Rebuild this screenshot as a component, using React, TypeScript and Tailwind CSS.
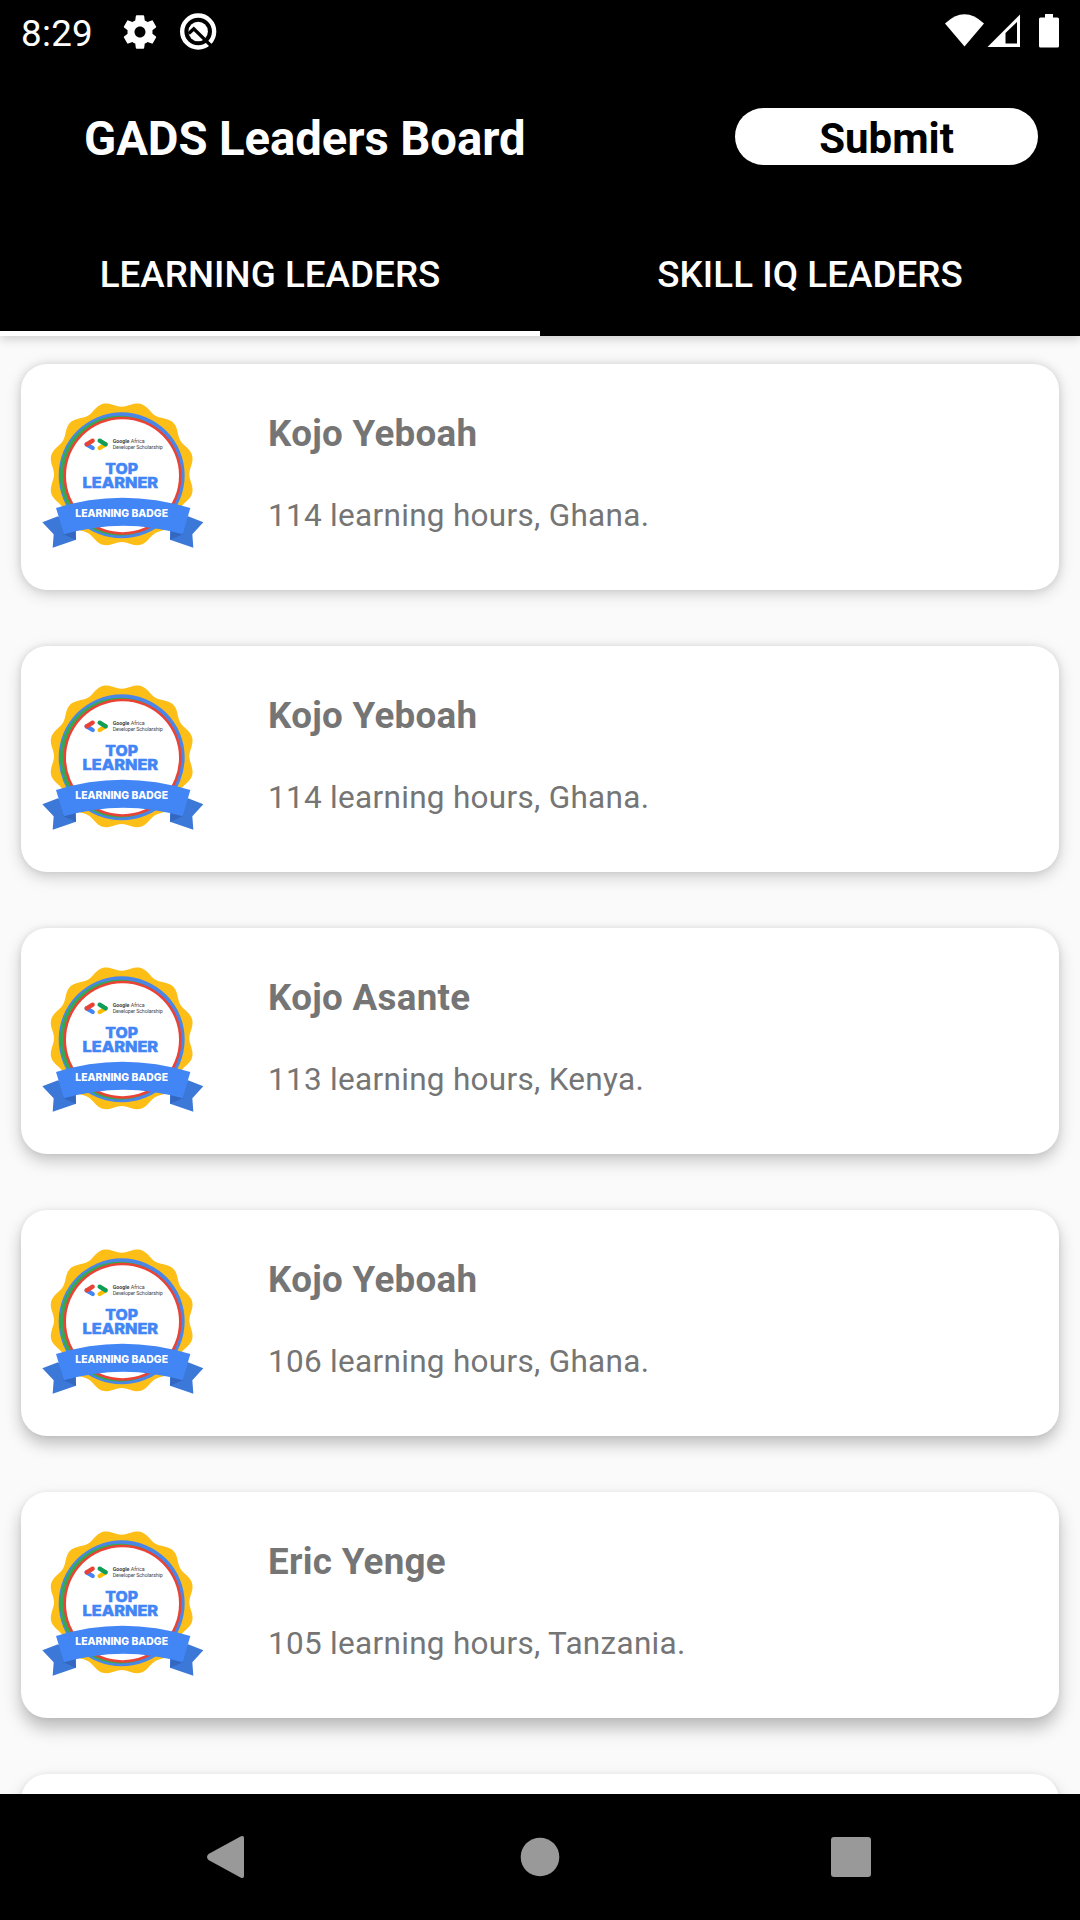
const leaders = [
  { name: 'Kojo Yeboah', detail: '114 learning hours, Ghana.', shadow: 'shadow-[0_4px_16px_rgba(0,0,0,0.16),0_0_8px_rgba(0,0,0,0.10)]' },
  { name: 'Kojo Yeboah', detail: '114 learning hours, Ghana.', shadow: 'shadow-[0_5px_16px_rgba(0,0,0,0.18),0_0_7px_rgba(0,0,0,0.09)]' },
  { name: 'Kojo Asante', detail: '113 learning hours, Kenya.', shadow: 'shadow-[0_7px_16px_rgba(0,0,0,0.21),0_0_6px_rgba(0,0,0,0.08)]' },
  { name: 'Kojo Yeboah', detail: '106 learning hours, Ghana.', shadow: 'shadow-[0_8px_16px_rgba(0,0,0,0.24),0_0_5px_rgba(0,0,0,0.07)]' },
  { name: 'Eric Yenge', detail: '105 learning hours, Tanzania.', shadow: 'shadow-[0_10px_17px_rgba(0,0,0,0.26),0_0_5px_rgba(0,0,0,0.06)]' },
  { name: '', detail: '', shadow: 'shadow-[0_10px_17px_rgba(0,0,0,0.26),0_0_5px_rgba(0,0,0,0.06)]' },
];

// Twelve-lobed outline of the yellow seal.
const seal =
  'M' +
  Array.from({ length: 180 }, (_, i) => {
    const a = (i / 180) * Math.PI * 2;
    const r = 211 - 8 * Math.cos(12 * a);
    return `${(275 + r * Math.sin(a)).toFixed(1)} ${(253 - r * Math.cos(a)).toFixed(1)}`;
  }).join('L') +
  'Z';

function Badge() {
  return (
    <svg viewBox="0 0 570 510" className="h-[170px] w-[190px] shrink-0">
      <path d={seal} fill="#fdbf17" />
      <circle cx="275" cy="256" r="189" fill="#4a86e8" />
      <circle cx="270" cy="257" r="180" fill="#34a853" />
      <circle cx="277.500" cy="257" r="177" fill="#ea4335" />
      <circle cx="277.500" cy="257" r="169.500" fill="#fff" />
      <g fill="none" strokeWidth="13" strokeLinecap="round">
        <path d="M170 163L188 174" stroke="#4285f4" />
        <path d="M170 163L188 152" stroke="#ea4335" />
        <path d="M227 163L209 174" stroke="#fbbc04" />
        <path d="M209 152L227 163" stroke="#109d58" />
      </g>
      <g fontFamily="Roboto, sans-serif" fontSize="16" fill="#444">
        <text x="248" y="158" textLength="96"><tspan fontWeight="700">Google</tspan> Africa</text>
        <text x="248" y="177" textLength="150">Developer Scholarship</text>
      </g>
      <g fontFamily="Inter, sans-serif" fontWeight="800" textAnchor="middle" fill="#4285f4" stroke="#4285f4" strokeWidth="1.500" fontSize="44">
        <text x="275" y="252" textLength="98" lengthAdjust="spacingAndGlyphs">TOP</text>
        <text x="271" y="295" textLength="227" lengthAdjust="spacingAndGlyphs">LEARNER</text>
      </g>
      <path d="M37 397L84 379L138 420V449L68 473L71 433Z" fill="#3c78d8" />
      <path d="M520 397L474 379L420 420V449L490 473L487 433Z" fill="#3c78d8" />
      <path d="M97 431L134 422L138 449Z" fill="#3367c0" />
      <path d="M462 431L424 422L420 449Z" fill="#3367c0" />
      <path d="M78 354Q275 292 481 354L458 433Q280 381 102 433Z" fill="#4285f4" />
      <text x="275" y="381" textLength="278" lengthAdjust="spacingAndGlyphs" textAnchor="middle" fill="#fff" fontFamily="Inter, sans-serif" fontWeight="800" fontSize="32">LEARNING BADGE</text>
    </svg>
  );
}

function StatusBar() {
  return (
    <div className="flex h-[64px] items-start justify-between">
      <div className="flex items-start">
        <span className="ml-[21px] mt-[12px] w-[100px] text-[36.750px] leading-[43px] tracking-[0.3px]">8:29</span>
        <svg viewBox="0 0 24 24" className="-ml-[1px] mt-[12px] size-[40px]" fill="#fff">
          <path d="M19.43 12.98c.04-.32.07-.64.07-.98s-.03-.66-.07-.98l2.11-1.65c.19-.15.24-.42.12-.64l-2-3.46c-.12-.22-.39-.3-.61-.22l-2.49 1c-.52-.4-1.080-.73-1.690-.98l-.38-2.650C14.460 2.180 14.250 2 14 2h-4c-.25 0-.46.18-.49.42l-.38 2.650c-.61.25-1.170.59-1.690.98l-2.490-1c-.23-.09-.49 0-.61.22l-2 3.460c-.13.22-.07.49.12.64l2.110 1.650c-.04.32-.07.65-.07.98s.03.66.07.98l-2.110 1.650c-.19.15-.24.42-.12.64l2 3.460c.12.22.39.3.61.22l2.490-1c.52.4 1.080.73 1.690.98l.38 2.650c.03.24.24.42.49.42h4c.25 0 .46-.18.49-.42l.38-2.650c.61-.25 1.170-.59 1.690-.98l2.490 1c.23.09.49 0 .61-.22l2-3.460c.12-.22.07-.49-.12-.64zM12 15.300c-1.820 0-3.300-1.480-3.300-3.300s1.480-3.300 3.300-3.300 3.300 1.480 3.300 3.300-1.480 3.300-3.300 3.300z" />
        </svg>
        <svg viewBox="540 39 110 110" className="ml-[20px] mt-[13px] size-[37px]">
          <circle cx="594" cy="94" r="47.500" fill="none" stroke="#fff" strokeWidth="13" />
          <circle cx="594" cy="94" r="29" fill="#fff" />
          <path d="M566 100L581 86L632 136" fill="none" stroke="#000" strokeWidth="10" />
        </svg>
      </div>
      <svg viewBox="900 0 180 70" className="h-[70px] w-[180px]" fill="#fff">
        <path d="M945 23.500Q964.500 5 984 23.500L964.500 46.500Z" />
        <path fillRule="evenodd" d="M987.500 47L1020 14.500V47ZM1005.500 33V43.500H1017V22Z" />
        <path d="M1045 14H1053V17.500H1057.500Q1059 17.500 1059 19V46Q1059 47.500 1057.500 47.500H1040.500Q1039 47.500 1039 46V19Q1039 17.500 1040.500 17.500H1045Z" />
      </svg>
    </div>
  );
}

export default function App() {
  return (
    <div className="flex h-[1920px] w-[1080px] flex-col overflow-hidden bg-[#fafafa] font-[Roboto,sans-serif]">
      <header className="z-10 flex h-[336px] shrink-0 flex-col bg-black text-white shadow-[0_3px_10px_rgba(0,0,0,0.18)]">
        <StatusBar />
        <div className="flex h-[146px] items-start justify-between pl-[84px] pr-[42px] pt-[44px]">
          <h1 className="mt-[3px] text-[47.250px] font-bold leading-[56px] tracking-[-0.080px]">GADS Leaders Board</h1>
          <button className="h-[57px] w-[303px] rounded-full bg-white pt-[1px] text-[42px] font-bold leading-[60px] text-black">Submit</button>
        </div>
        <nav className="grid h-[126px] grid-cols-2 text-center text-[36.750px] font-medium leading-[43px] tracking-[0.050px]">
          <div className="border-b-[5px] border-white pt-[43px]">LEARNING LEADERS</div>
          <div className="pt-[43px]">SKILL IQ LEADERS</div>
        </nav>
      </header>
      <main className="flex min-h-0 flex-1 flex-col gap-[56px] overflow-hidden px-[21px] pt-[28px]">
        {leaders.map((l, i) => (
          <article key={i} className={`flex h-[226px] shrink-0 rounded-[26px] bg-white pl-[9px] pt-[26px] text-[#757575] ${l.shadow}`}>
            {l.name && (
              <>
                <Badge />
                <div className="ml-[48px] mt-[22px] flex flex-col gap-[42px]">
                  <h2 className="text-[36.750px] font-bold leading-[43px] tracking-[0.300px]">{l.name}</h2>
                  <p className="text-[31.500px] leading-[37px] tracking-[0.300px]">{l.detail}</p>
                </div>
              </>
            )}
          </article>
        ))}
      </main>
      <footer className="z-10 h-[126px] shrink-0 bg-black">
        <svg viewBox="0 1794 1080 126" className="h-[126px] w-[1080px]" fill="#999">
          <path d="M208.500 1854L240.500 1836.500Q244 1835 244 1838V1876Q244 1879 240.500 1877.500L208.500 1860Q205.500 1857 208.500 1854Z" />
          <circle cx="540" cy="1857" r="19.300" />
          <rect x="831" y="1837" width="40" height="40" rx="3" />
        </svg>
      </footer>
    </div>
  );
}
